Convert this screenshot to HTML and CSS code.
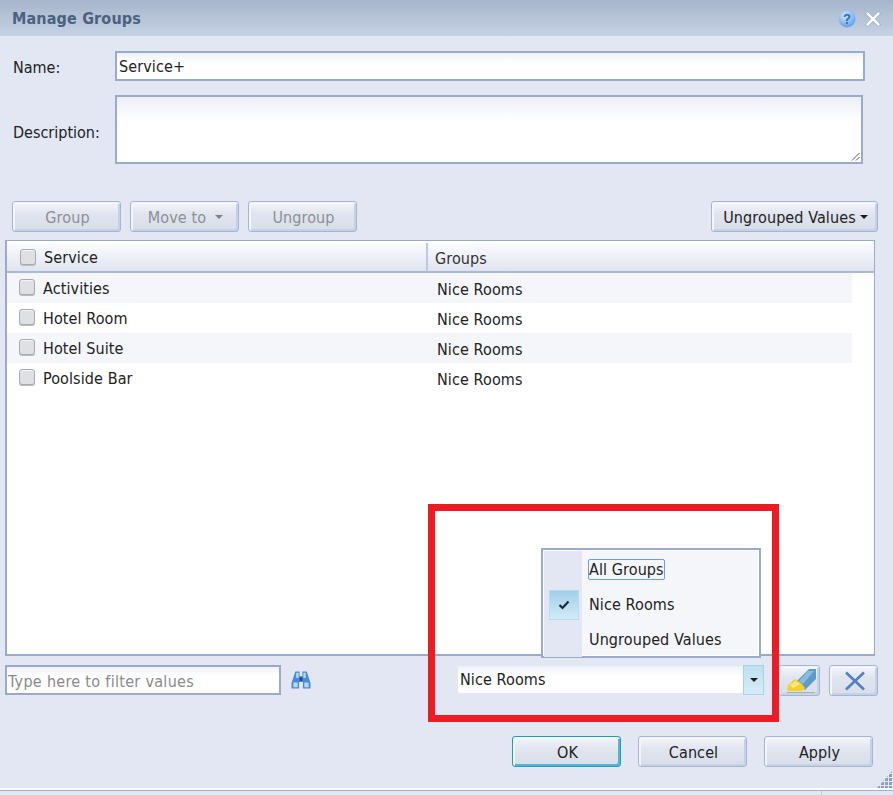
FILE: index.html
```html
<!DOCTYPE html>
<html lang="en">
<head>
<meta charset="utf-8">
<title>Manage Groups</title>
<link rel="stylesheet" href="styles.css">
</head>
<body>
<div class="dialog">
  <header class="titlebar">
    <h1 class="title">Manage Groups</h1>
    <div class="title-icons">
      <svg class="help" width="18" height="18" viewBox="0 0 18 18"><defs><radialGradient id="hg" cx="40%" cy="30%" r="75%"><stop offset="0" stop-color="#d6e8fb"/><stop offset="1" stop-color="#5b9ae6"/></radialGradient></defs><circle cx="9" cy="9" r="8.5" fill="url(#hg)"/><path d="M5.700 7C5.700 5 7.300 3.800 9.100 3.800c2 0 3.400 1.200 3.400 2.900 0 2.300-2.500 2.300-2.500 4.300H7.900c0-3 2.400-3 2.400-4.200 0-.6-.5-1.100-1.300-1.100-.9 0-1.300.6-1.300 1.400z" fill="#3a76c8"/><rect x="7.900" y="12" width="2.100" height="2.100" fill="#3a76c8"/></svg>
      <svg width="16" height="16" viewBox="0 0 16 16"><path d="M2.500 2.500l11 11M13.500 2.500l-11 11" stroke="#8b99ae" stroke-width="3.800" stroke-linecap="round"/><path d="M2.500 2.500l11 11M13.500 2.500l-11 11" stroke="#fff" stroke-width="2.600" stroke-linecap="round"/></svg>
    </div>
  </header>

  <main class="content">
    <div class="field-name">
      <label class="field-label">Name:</label>
      <div class="input name-input">Service+</div>
    </div>
    <div class="field-desc">
      <label class="field-label">Description:</label>
      <div class="input desc-input">
        <svg class="desc-grip" width="9" height="9" viewBox="0 0 9 9"><path d="M8.500 1L1 8.500M8.500 5L5 8.500" stroke="#555" stroke-width="1"/></svg>
      </div>
    </div>

    <div class="toolbar">
      <button class="btn btn-sm disabled">Group</button>
      <button class="btn btn-sm disabled">Move to <span class="caret caret-gap"></span></button>
      <button class="btn btn-sm disabled">Ungroup</button>
      <button class="btn btn-values">Ungrouped Values <span class="caret dark"></span></button>
    </div>

    <section class="table">
      <div class="thead">
        <div class="th th-service"><span class="check"></span>Service</div>
        <div class="th th-groups">Groups</div>
      </div>
      <div class="row odd"><div class="cell-service"><span class="check"></span>Activities</div><div class="cell-group">Nice Rooms</div></div>
      <div class="row"><div class="cell-service"><span class="check"></span>Hotel Room</div><div class="cell-group">Nice Rooms</div></div>
      <div class="row odd"><div class="cell-service"><span class="check"></span>Hotel Suite</div><div class="cell-group">Nice Rooms</div></div>
      <div class="row"><div class="cell-service"><span class="check"></span>Poolside Bar</div><div class="cell-group">Nice Rooms</div></div>
    </section>

    <div class="filterbar">
      <div class="input filter-input">Type here to filter values</div>
      <svg class="binoculars" width="20" height="20" viewBox="0 0 21 20"><path d="M4.500 1h4.500v5h3V1h4.500l4 12.500V19h-8v-7h-4v7H.5v-5.500z" fill="#4a8ad8"/><path d="M5.500 2.500H8V8H5.500zM13 2.500h2.500V8H13zM2.500 12.500H7v5H2.500zM14 12.500h4.500v5H14z" fill="#bcd9f6"/><rect x="9" y="7" width="3" height="4" fill="#1d4f9c"/></svg>
      <div class="combo">
        <span class="combo-text">Nice Rooms</span>
        <span class="combo-arrow"><span class="caret dark"></span></span>
      </div>
      <button class="btn btn-icon btn-erase">
        <svg width="36" height="27" viewBox="0 0 36 27"><path d="M14 15L27 2h7v10L23 23z" fill="#5d9bc9"/><path d="M26 4h6L21 17l-4-3z" fill="#8dbbdc"/><path d="M5 23l1-5 7-6 6 4 4 5-3 3H7z" fill="#f5cf2c"/><path d="M8 18l5-4 5 3-7 4z" fill="#fbe98a"/><rect x="5" y="25" width="28" height="1" fill="#a9aeb8"/></svg>
      </button>
      <button class="btn btn-icon btn-clear">
        <svg width="24" height="20" viewBox="0 0 24 20"><path d="M3 1.500l18 17M21 1.500l-18 17" stroke="#4f81c4" stroke-width="2.600"/></svg>
      </button>
    </div>

    <div class="actions">
      <button class="btn btn-action btn-ok">OK</button>
      <button class="btn btn-action">Cancel</button>
      <button class="btn btn-action">Apply</button>
    </div>
  </main>

  <svg class="grip" width="16" height="18" viewBox="0 0 16 18"><defs><pattern id="gp" width="4" height="4" patternUnits="userSpaceOnUse"><rect width="3" height="3" fill="#8f9fba"/></pattern></defs><path d="M0 18L16 0v18z" fill="url(#gp)"/></svg>

  <footer class="bottom"></footer>

  <div class="highlight"></div>
  <ul class="menu">
    <li class="menu-item"><span class="menu-gutter"></span><span class="focus">All Groups</span></li>
    <li class="menu-item"><span class="menu-gutter"><span class="tick"><svg width="12" height="10" viewBox="0 0 12 10"><path d="M1.500 5l3 3 6-6.500" fill="none" stroke="#1b2a3c" stroke-width="2.200"/></svg></span></span><span>Nice Rooms</span></li>
    <li class="menu-item"><span class="menu-gutter"></span><span>Ungrouped Values</span></li>
  </ul>
</div>
</body>
</html>
```
FILE: styles.css
```css
* { box-sizing: border-box; }
html, body { margin: 0; padding: 0; }
body { font-family: "DejaVu Sans Condensed", "DejaVu Sans", sans-serif; font-size: 16px; letter-spacing: 0.1px; color: #222; background: #e3e7f3; overflow: hidden; }
.dialog { position: relative; width: 893px; height: 795px; background: #e3e7f3; display: flex; flex-direction: column; overflow: hidden; }

.titlebar { height: 36px; flex: none; display: flex; align-items: center; justify-content: space-between; padding: 1px 12px 0; background: linear-gradient(#a6b5cc, #c6d2e4); }
.title { margin: 0; font-size: 16px; font-weight: 700; letter-spacing: 0.15px; color: #4c6080; }
.title-icons { display: flex; align-items: center; gap: 9px; }
.title-icons svg { display: block; }

.content { flex: 1; min-height: 0; display: flex; flex-direction: column; }
.field-label { width: 115px; padding-left: 13px; flex: none; letter-spacing: 0; }
.field-name { display: flex; align-items: center; margin-top: 15px; height: 30px; }
.field-name .field-label { padding-top: 2px; }
.field-desc { display: flex; align-items: center; margin-top: 14px; height: 69px; position: relative; }
.field-desc .field-label { padding-top: 5px; }
.input { background: linear-gradient(#eef2f8, #fff 35%); border: 2px solid #9aaac8; color: #222; }
.name-input { width: 750px; height: 30px; padding-left: 2px; line-height: 28px; }
.desc-input { width: 748px; height: 69px; position: relative; background: linear-gradient(#eaeef6, #fff 24px); }
.desc-grip { position: absolute; right: 1px; bottom: 1px; }

.btn { font: inherit; letter-spacing: inherit; color: #222; padding: 1px 0 0 2px; background: linear-gradient(#f5f6fa, #e1e5ef 40%, #d8dde9); border: 1px solid #a3b5d2; border-radius: 3px; box-shadow: inset 2px 2px 0 #f2f5fb, inset -2px -2px 0 #c5d1e4; display: flex; align-items: center; justify-content: center; }
.disabled { color: #8b8f96; }
.toolbar { display: flex; height: 31px; margin-top: 37px; padding-left: 12px; gap: 9px; }
.btn-sm { width: 109px; height: 31px; }
.btn-values { width: 167px; height: 31px; margin-left: 345px; }
.caret { display: inline-block; width: 0; height: 0; margin-left: 4px; border-left: 4px solid transparent; border-right: 4px solid transparent; border-top: 4px solid #7d8087; }
.caret-gap { margin-left: 9px; }
.caret.dark { border-top-color: #1e1e1e; }

.table { width: 870px; height: 416px; margin: 8px 0 0 5px; flex: none; background: #fff; border: 2px solid #9aaac8; border-top-width: 1px; border-right-width: 1px; padding-top: 2px; }
.thead { display: flex; height: 30px; background: linear-gradient(#fbfcfe, #dfe4ef); border-bottom: 2px solid #a9bad5; box-shadow: 0 1px 0 #fff; }
.th { display: flex; align-items: center; height: 28px; }
.th-service { width: 421px; padding-left: 12px; border-right: 2px solid #bcc9de; }
.th-service .check { margin-left: 1px; margin-right: 8px; }
.th-groups { padding-left: 7px; padding-top: 3px; color: #333; }
.check { width: 16px; height: 16px; margin-right: 8px; background: #dfe0e3; border: 1px solid #a8abb0; border-radius: 3px; box-shadow: inset 0 1px 0 #f4f4f5, 0 1px 0 #bbb; flex: none; }
.row { display: flex; width: 845px; height: 30px; align-items: center; }
.row.odd { background: #f5f6fa; }
.cell-service { width: 430px; padding-left: 12px; display: flex; align-items: center; }
.cell-service .check { margin-right: 8px; margin-top: -3px; }
.cell-group { padding-top: 2px; }

.filterbar { display: flex; align-items: center; height: 30px; margin-top: 9px; padding-left: 5px; }
.filter-input { width: 276px; height: 30px; padding-left: 1px; line-height: 30px; letter-spacing: 0.3px; color: #8a8a8a; }
.binoculars { margin-left: 10px; flex: none; }
.combo { width: 306px; height: 30px; margin-left: 147px; display: flex; justify-content: space-between; align-items: stretch; }
.combo-text { flex: 1; height: 27px; margin-top: 1px; padding-left: 2px; line-height: 27px; background: linear-gradient(#eef2f8, #fff 40%); }
.combo-arrow { width: 21px; flex: none; display: flex; align-items: center; justify-content: center; background: linear-gradient(#bfe0ee, #d6ecf6); border: 1px solid #a9d2e6; }
.combo-arrow .caret { margin: 0; }
.btn-icon { height: 31px; flex: none; }
.btn-erase { width: 42px; margin-left: 14px; }
.btn-clear { width: 49px; margin-left: 9px; }

.actions { display: flex; justify-content: flex-end; gap: 17px; margin-top: 41px; padding-right: 20px; }
.btn-action { width: 109px; height: 31px; }
.btn-ok { border-color: #1f9cc0; box-shadow: inset 2px 2px 0 #f2f5fb, inset -2px -2px 0 #52b6d4; }

.grip { position: absolute; right: 0; bottom: 7px; }
.bottom { position: relative; height: 7px; flex: none; margin-top: auto; border-top: 2px solid #fff; background: #e3e7f3; box-shadow: inset 0 1px 0 #9db1d0; }
.bottom::after { content: ""; position: absolute; left: 821px; top: 1px; width: 1px; height: 4px; background: #c5ccd8; }

.highlight { position: absolute; left: 428px; top: 504px; width: 351px; height: 218px; border: 7px solid #ed1c24; pointer-events: none; }
.menu { position: absolute; left: 541px; top: 548px; width: 220px; height: 110px; margin: 0; padding: 1px; list-style: none; border: 2px solid #9aaac8; background: #f5f6fa; box-shadow: inset 0 0 0 1px #fff; }
.menu-item { display: flex; align-items: center; height: 35px; position: relative; }
.menu-item:first-child { height: 36px; }
.menu-gutter { width: 38px; align-self: stretch; margin-right: 7px; background: #e3e7f3; display: flex; align-items: center; justify-content: center; flex: none; }
.tick { width: 30px; height: 30px; margin-left: 2px; background: linear-gradient(#a0d0ea, #d2ecf7); display: flex; align-items: center; justify-content: center; border: 1px solid #b8dcee; }
.focus { border: 1px solid #6a9fee; border-radius: 2px; margin-left: -1px; height: 21px; line-height: 19px; }
```
